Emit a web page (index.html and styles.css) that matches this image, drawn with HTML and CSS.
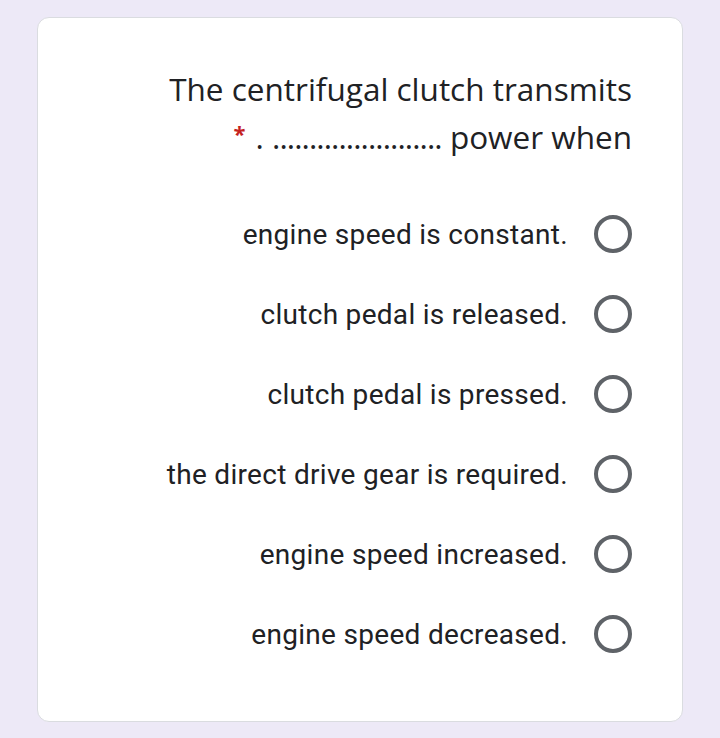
FILE: index.html
```html
<!DOCTYPE html>
<html>
<head>
<meta charset="utf-8">
<link rel="stylesheet" href="styles.css">
</head>
<body>
<div class="card">
  <div class="title">
    <div class="line">The centrifugal clutch transmits</div>
    <div class="line"><span class="req">*</span> . <span class="dots">.......................</span> power when</div>
  </div>
  <div class="options">
    <div class="opt"><span class="label">engine speed is constant.</span><span class="radio"></span></div>
    <div class="opt"><span class="label">clutch pedal is released.</span><span class="radio"></span></div>
    <div class="opt"><span class="label">clutch pedal is pressed.</span><span class="radio"></span></div>
    <div class="opt"><span class="label">the direct drive gear is required.</span><span class="radio"></span></div>
    <div class="opt"><span class="label">engine speed increased.</span><span class="radio"></span></div>
    <div class="opt"><span class="label">engine speed decreased.</span><span class="radio"></span></div>
  </div>
</div>
</body>
</html>
```
FILE: styles.css
```css
html, body {
  margin: 0;
  padding: 0;
  background: #ede9f7;
}
body {
  padding: 17px 37px 16px 37px;
}
.card {
  box-sizing: border-box;
  width: 646px;
  height: 705px;
  background: #fff;
  border: 1px solid #dadce0;
  border-radius: 12px;
  padding: 47px 50px 0 50px;
}
.title {
  font-family: "Open Sans", sans-serif;
  font-size: 31.5px;
  line-height: 48px;
  color: #202124;
  text-align: right;
}
.dots {
  letter-spacing: -0.9px;
}
.req {
  color: #c5221f;
  font-size: 22px;
  font-weight: 700;
  line-height: 0;
  vertical-align: 7px;
  margin-right: 2px;
}
.options {
  margin-top: 33px;
  display: flex;
  flex-direction: column;
}
.opt {
  height: 80px;
  display: flex;
  justify-content: flex-end;
  align-items: center;
  gap: 26px;
}
.label {
  font-family: Roboto, sans-serif;
  font-size: 28px;
  color: #202124;
  letter-spacing: 0.3px;
}
.radio {
  box-sizing: border-box;
  width: 38px;
  height: 38px;
  border: 4px solid #5f6368;
  border-radius: 50%;
  flex: none;
}
```
